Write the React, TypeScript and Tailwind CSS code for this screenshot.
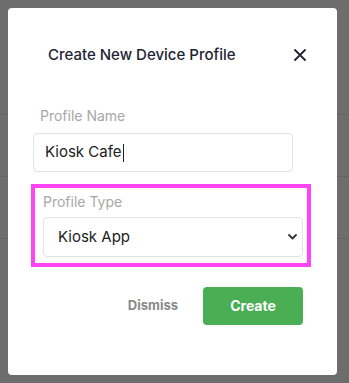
export default function App() {
  return (
    <div
      className="relative h-[383px] w-[349px] overflow-hidden bg-[#6d6d6d]"
      style={{ fontFamily: "Inter, 'Liberation Sans', sans-serif" }}
    >
      {/* page behind the overlay */}
      <div className="absolute left-0 right-0 top-[114px] h-px bg-[#636363]" />
      <div className="absolute left-0 right-0 top-[176px] h-px bg-[#636363]" />
      <div className="absolute left-0 right-0 top-[238px] h-px bg-[#636363]" />

      <div className="relative ml-2 mt-2 flex h-[367px] w-[329px] flex-col rounded bg-white pl-[25px] pt-[35px]">
        <div className="flex items-center justify-between pr-[31px]">
          <h2 className="ml-[15px] text-[15px] font-medium leading-6 text-[#1e2433]">
            Create New Device Profile
          </h2>
          <button type="button" aria-label="Close" className="text-[#1e2433]">
            <svg width="12" height="12" viewBox="0 0 12 12" fill="none" stroke="currentColor" strokeWidth="1.8" strokeLinecap="round">
              <path d="M1 1l10 10M11 1L1 11" />
            </svg>
          </button>
        </div>

        <label className="ml-[7px] mt-[39px] text-sm leading-5 text-[#a8a8a8]">Profile Name</label>
        <div className="mt-[7px] flex h-[39px] w-[260px] items-center rounded border border-[#e3e3e3] pl-[11px] text-[15px] text-[#222]">
          Kiosk Cafe
          <span className="ml-px h-[18px] w-px bg-[#222]" />
        </div>

        <div className="-ml-[2px] mt-3 w-[280px] border-4 border-[#ff44f5] pb-[6px] pl-2 pr-1 pt-1">
          <label className="block text-sm leading-5 text-[#a8a8a8]">Profile Type</label>
          <div className="relative mt-[5px] flex h-10 w-[260px] items-center rounded border border-[#e3e3e3] pl-[14px] text-[15px] text-[#222]">
            Kiosk App
            <svg className="absolute right-[5px] top-[16px]" width="9" height="6" viewBox="0 0 9 6" fill="none" stroke="#333" strokeWidth="1.8" strokeLinecap="round" strokeLinejoin="round">
              <path d="M1 1l3.5 3.5L8 1" />
            </svg>
          </div>
        </div>

        <div className="mt-5 flex w-[270px] items-center justify-end">
          <button type="button" className="mr-[25px] text-[13px] font-bold text-[#8a8a8a]">
            Dismiss
          </button>
          <button type="button" className="h-[38px] w-[100px] rounded bg-[#4aae55] text-sm font-bold text-white">
            Create
          </button>
        </div>
      </div>
    </div>
  );
}
